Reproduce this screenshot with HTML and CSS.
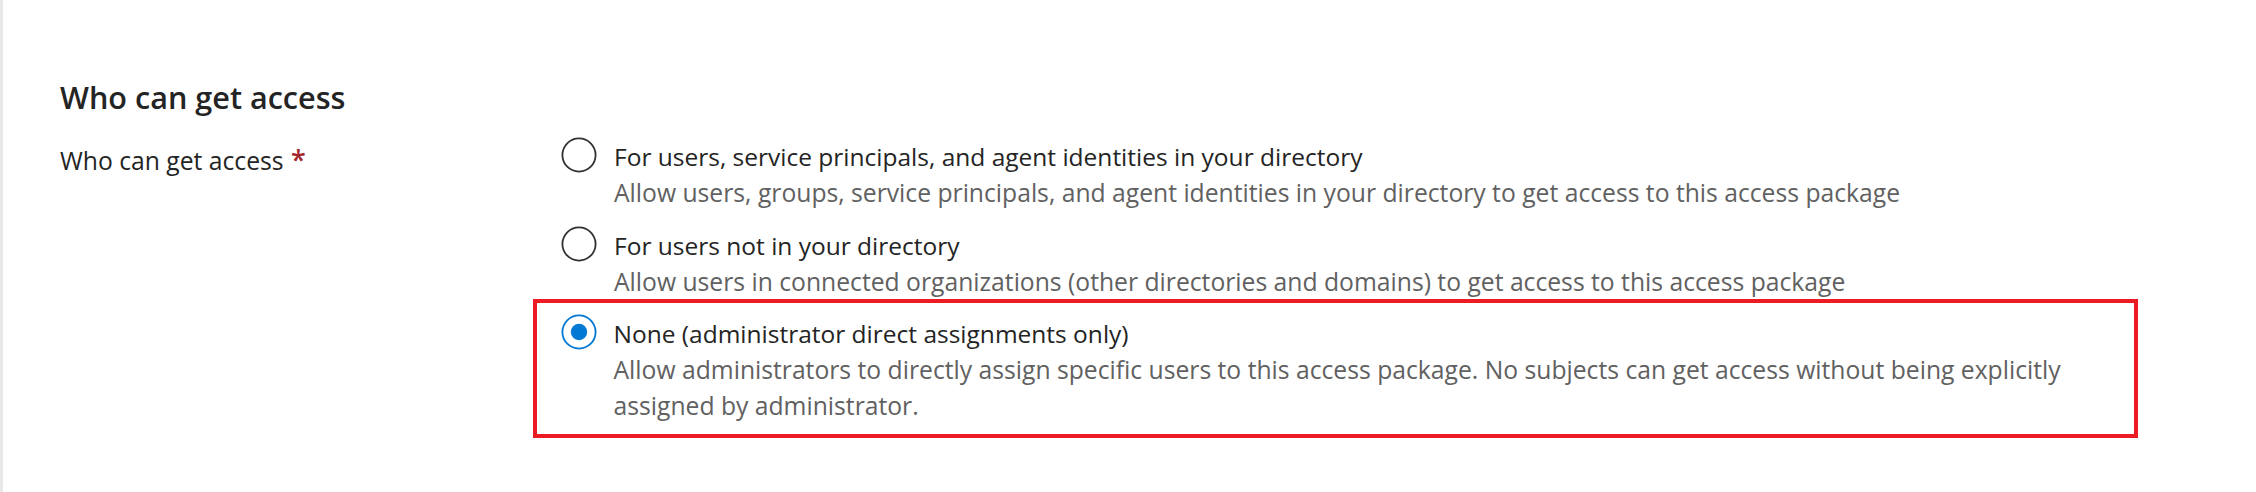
FILE: index.html
```html
<!DOCTYPE html>
<html lang="en">
<head>
<meta charset="utf-8">
<title>Who can get access</title>
<link rel="stylesheet" href="styles.css">
</head>
<body>
<main class="page">
  <section class="section">
    <h2 class="section-title">Who can get access</h2>
    <div class="field">
      <div class="field-label">Who can get access <span class="required">*</span></div>
      <div class="options" role="radiogroup">
        <div class="option">
          <svg class="radio" width="36" height="36" viewBox="0 0 36 36"><circle cx="18" cy="18" r="16.6" fill="none" stroke="#323130" stroke-width="1.8"/></svg>
          <div class="option-text">
            <div class="option-title">For users, service principals, and agent identities in your directory</div>
            <div class="option-desc">Allow users, groups, service principals, and agent identities in your directory to get access to this access package</div>
          </div>
        </div>
        <div class="option">
          <svg class="radio" width="36" height="36" viewBox="0 0 36 36"><circle cx="18" cy="18" r="16.6" fill="none" stroke="#323130" stroke-width="1.8"/></svg>
          <div class="option-text">
            <div class="option-title">For users not in your directory</div>
            <div class="option-desc">Allow users in connected organizations (other directories and domains) to get access to this access package</div>
          </div>
        </div>
        <div class="highlight">
          <div class="option">
            <svg class="radio" width="36" height="36" viewBox="0 0 36 36"><circle cx="18" cy="18" r="16.6" fill="none" stroke="#0078d4" stroke-width="1.8"/><circle cx="18" cy="18" r="8.2" fill="#0078d4"/></svg>
            <div class="option-text">
              <div class="option-title">None (administrator direct assignments only)</div>
              <div class="option-desc">Allow administrators to directly assign specific users to this access package. No subjects can get access without being explicitly assigned by administrator.</div>
            </div>
          </div>
        </div>
      </div>
    </div>
  </section>
</main>
</body>
</html>
```

FILE: styles.css
```css
html, body {
  margin: 0;
  padding: 0;
  background: #ffffff;
}

body {
  font-family: "Open Sans", "Noto Sans", "Liberation Sans", sans-serif;
  color: #242424;
}

.page {
  min-height: 492px;
  box-sizing: border-box;
  border-left: 3px solid #e8e8e8;
  padding: 77px 0 0 57px;
}

.section-title {
  margin: 0;
  font-size: 30.6px;
  line-height: 40px;
  font-weight: 600;
  color: #242424;
}

.field {
  display: grid;
  grid-template-columns: 501px 1fr;
  margin-top: 20px;
}

.field-label {
  padding-top: 6px;
  font-size: 24.7px;
  line-height: 36px;
  color: #242424;
}

.required {
  color: #a4262c;
  font-weight: 600;
  font-size: 27px;
  line-height: 0;
  margin-left: 1px;
}

.options {
  display: flex;
  flex-direction: column;
  gap: 15px;
}

.option {
  display: flex;
  align-items: flex-start;
  gap: 17px;
}

.radio {
  flex: 0 0 auto;
  display: block;
}

.option-text {
  padding-top: 2px;
  max-width: 1500px;
}

.option-title {
  font-size: 24.5px;
  line-height: 36px;
  color: #242424;
}

.option-desc {
  font-size: 24.7px;
  line-height: 36px;
  color: #616161;
}

.highlight {
  width: 1605px;
  box-sizing: border-box;
  margin-left: -28px;
  margin-top: -16px;
  border: 4.5px solid #ed1c24;
  padding: 10.5px 0 10.5px 23.5px;
}
```
